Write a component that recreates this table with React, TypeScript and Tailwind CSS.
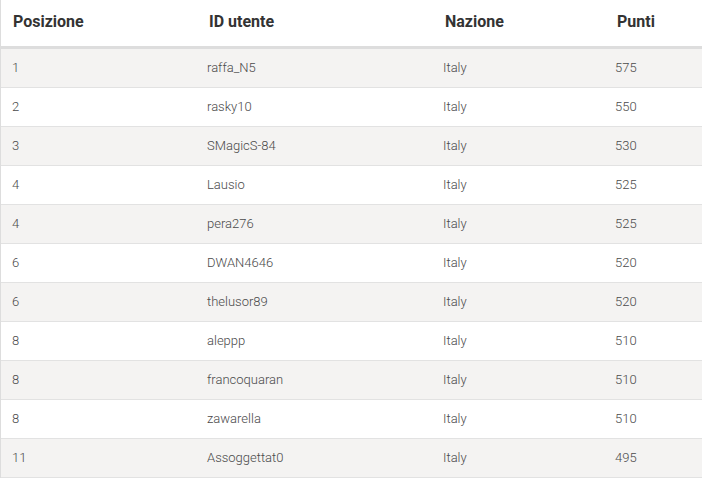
const rows = [
  { pos: '1', user: 'raffa_N5', country: 'Italy', points: 575 },
  { pos: '2', user: 'rasky10', country: 'Italy', points: 550 },
  { pos: '3', user: 'SMagicS-84', country: 'Italy', points: 530 },
  { pos: '4', user: 'Lausio', country: 'Italy', points: 525 },
  { pos: '4', user: 'pera276', country: 'Italy', points: 525 },
  { pos: '6', user: 'DWAN4646', country: 'Italy', points: 520 },
  { pos: '6', user: 'thelusor89', country: 'Italy', points: 520 },
  { pos: '8', user: 'aleppp', country: 'Italy', points: 510 },
  { pos: '8', user: 'francoquaran', country: 'Italy', points: 510 },
  { pos: '8', user: 'zawarella', country: 'Italy', points: 510 },
  { pos: '11', user: 'Assoggettat0', country: 'Italy', points: 495 },
];

const cols = 'grid grid-cols-[194px_236px_172px_1fr]';

export default function App() {
  return (
    <div className="min-h-screen bg-white font-['Roboto','Liberation_Sans',sans-serif]">
      <div className="border-l border-[#dddddd]">
        {/* Header */}
        <div
          className={`${cols} h-[49px] items-center border-b-[3px] border-[#dddddd] pb-[3px] text-[16px] font-bold text-[#333333]`}
        >
          <div className="pl-3">Posizione</div>
          <div className="pl-[14px]">ID utente</div>
          <div className="pl-[14px]">Nazione</div>
          <div className="pl-[14px]">Punti</div>
        </div>

        {/* Rows */}
        {rows.map((row, i) => (
          <div
            key={i}
            className={`${cols} h-[39px] items-center border-b border-[#e2e2e2] text-[13px] font-light text-[#4a4a4a] ${
              i % 2 === 0 ? 'bg-[#f4f3f2]' : 'bg-white'
            }`}
          >
            <div className="pl-[11px]">{row.pos}</div>
            <div className="pl-3">{row.user}</div>
            <div className="pl-3">{row.country}</div>
            <div className="pl-3">{row.points}</div>
          </div>
        ))}
      </div>
    </div>
  );
}
